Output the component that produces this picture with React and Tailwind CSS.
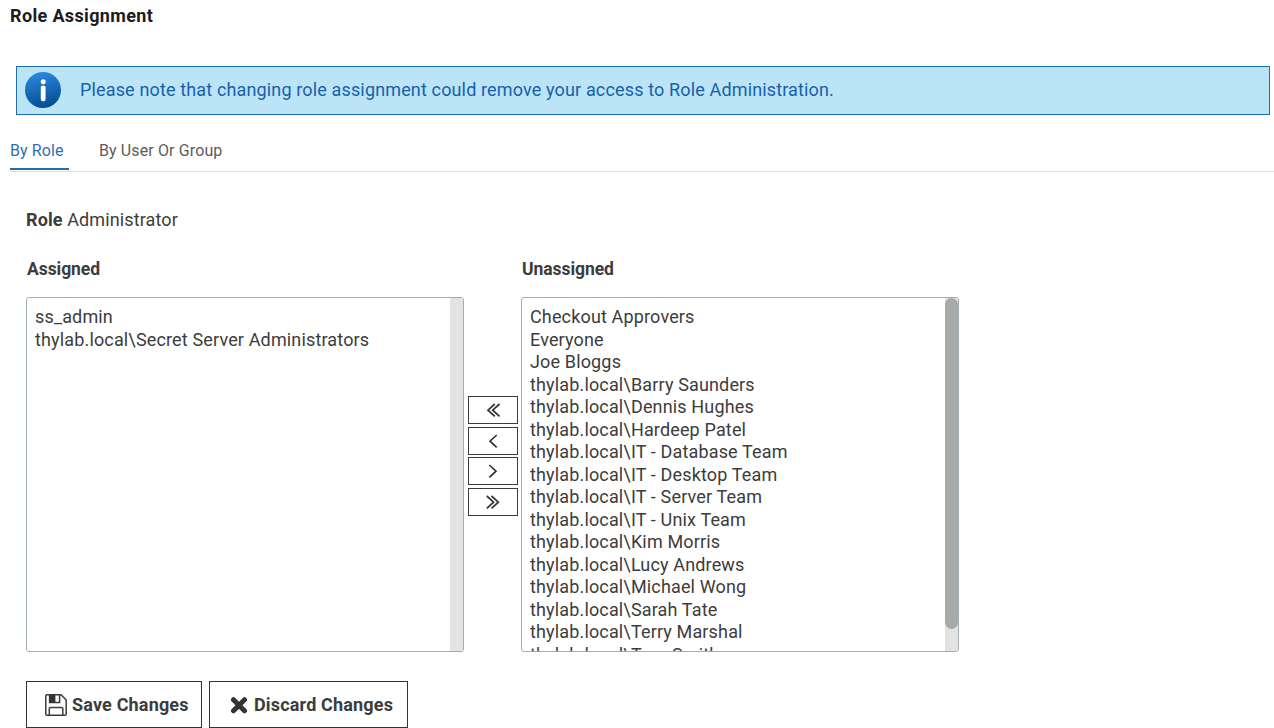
const assigned = ['ss_admin', 'thylab.local\\Secret Server Administrators'];

const unassigned = [
  'Checkout Approvers',
  'Everyone',
  'Joe Bloggs',
  'thylab.local\\Barry Saunders',
  'thylab.local\\Dennis Hughes',
  'thylab.local\\Hardeep Patel',
  'thylab.local\\IT - Database Team',
  'thylab.local\\IT - Desktop Team',
  'thylab.local\\IT - Server Team',
  'thylab.local\\IT - Unix Team',
  'thylab.local\\Kim Morris',
  'thylab.local\\Lucy Andrews',
  'thylab.local\\Michael Wong',
  'thylab.local\\Sarah Tate',
  'thylab.local\\Terry Marshal',
  'thylab.local\\Tom Smith',
];

const arrows = [
  { label: 'Assign all', d: 'M26.8 8 L20 14.2 L26.8 20.4 M31.5 8 L24.7 14.2 L31.5 20.4' },
  { label: 'Assign', d: 'M28.7 8 L22 14.2 L28.7 20.4' },
  { label: 'Unassign', d: 'M21.3 8 L28 14.2 L21.3 20.4' },
  { label: 'Unassign all', d: 'M18.8 8 L25.6 14.2 L18.8 20.4 M23.5 8 L30.3 14.2 L23.5 20.4' },
];

function InfoIcon() {
  return (
    <svg className="mb-[2px] h-9 w-9 shrink-0" viewBox="0 0 36 36">
      <defs>
        <linearGradient id="info" x1="0.1" y1="0" x2="0.3" y2="1">
          <stop offset="0" stopColor="#2f8be0" />
          <stop offset="1" stopColor="#044f94" />
        </linearGradient>
      </defs>
      <circle cx="18" cy="18" r="18" fill="url(#info)" />
      <circle cx="18.2" cy="9.8" r="2.5" fill="#fff" />
      <rect x="15.8" y="13.4" width="4.8" height="15.8" rx="2.2" fill="#fff" />
    </svg>
  );
}

function SaveIcon() {
  return (
    <svg className="h-[22px] w-[22px] shrink-0" viewBox="0 0 22 22" fill="none" stroke="#3c3c3c" strokeWidth="1.5">
      <path d="M2 .8 H16 L21.2 6 V20 Q21.2 21.2 20 21.2 H2 Q.8 21.2 .8 20 V2 Q.8 .8 2 .8 Z" />
      <path d="M4.6 1 V8.4 H14.6 V1" />
      <rect x="4.6" y="1" width="5.8" height="7.4" fill="#333" stroke="none" />
      <path d="M4.3 21 V14.6 Q4.3 13.4 5.5 13.4 H16.6 Q17.8 13.4 17.8 14.6 V21" />
    </svg>
  );
}

function DiscardIcon() {
  return (
    <svg className="h-[18px] w-[18px] shrink-0" viewBox="0 0 18 18" fill="none" stroke="#333" strokeWidth="5">
      <path d="M3.5 3.7 L14.5 14.7 M14.5 3.7 L3.5 14.7" strokeLinecap="round" />
    </svg>
  );
}

function ListBox({ title, items, thumb }) {
  return (
    <section className="w-[438px]">
      <h2 className="h-[41px] pt-px pl-px text-[17.5px] leading-6 font-bold tracking-[-0.06px]">{title}</h2>
      <div className="flex h-[355px] overflow-hidden rounded-[3px] border border-[#a1adb5]">
        <ul className="flex-1 overflow-hidden pt-2 pl-2 text-[18px] leading-[22.5px] tracking-[0.15px]">
          {items.map((name) => (
            <li key={name} className="whitespace-nowrap">{name}</li>
          ))}
        </ul>
        <div className="w-[13px] bg-[#e3e3e3]">
          {thumb && <div className="h-[331px] rounded-full bg-[#a9a9a9]" />}
        </div>
      </div>
    </section>
  );
}

export default function App() {
  return (
    <main className="h-[728px] w-[1274px] overflow-hidden bg-white font-['Roboto',sans-serif] text-[#3c3c3c]">
      <h1 className="h-[66px] pt-1 pl-[10px] text-[18px] leading-6 font-bold tracking-[0.35px] text-[#1c1c1c]">Role Assignment</h1>
      <div className="mr-1 ml-4 flex h-[49px] items-center border border-[#1f6cb3] bg-[#bbe5f7] pl-2 text-[18px] text-[#1760ab]">
        <InfoIcon />
        <p className="ml-[19px] pb-[2px] tracking-[0.145px]">Please note that changing role assignment could remove your access to Role Administration.</p>
      </div>
      <nav className="ml-[10px] flex h-[57px] border-b border-[#dcdfe1] pt-[21px] text-[16px] leading-[30px] tracking-[0.12px]">
        <div className="h-[34px] w-[59px] border-b-2 border-[#1f6fae] text-[#2d6fb4]">By Role</div>
        <div className="ml-[30px] text-[#5c5c5c]">By User Or Group</div>
      </nav>
      <div className="pt-9 pl-[26px]">
        <p className="h-12 text-[18px] leading-6 tracking-[0.12px]"><span className="font-bold">Role</span> Administrator</p>
        <div className="flex">
          <ListBox title="Assigned" items={assigned} />
          <div className="flex w-[57px] flex-col items-center gap-[2.7px] pt-[140px]">
            {arrows.map((a) => (
              <button key={a.label} aria-label={a.label} className="h-7 w-[50px] border border-[#3c3c3c]">
                <svg className="-mt-px -ml-px h-7 w-[50px] max-w-none" viewBox="0 0 50 28" fill="none" stroke="#333" strokeWidth="1.7">
                  <path d={a.d} />
                </svg>
              </button>
            ))}
          </div>
          <ListBox title="Unassigned" items={unassigned} thumb />
        </div>
        <div className="mt-[29px] flex gap-[7px] text-[18px] font-bold tracking-[0.17px]">
          <button className="flex h-[47px] w-[176px] items-center border border-[#333] pl-[18px]">
            <SaveIcon />
            <span className="ml-[5px] whitespace-nowrap">Save Changes</span>
          </button>
          <button className="flex h-[47px] w-[199px] items-center border border-[#333] pl-5">
            <DiscardIcon />
            <span className="ml-[6px] whitespace-nowrap">Discard Changes</span>
          </button>
        </div>
      </div>
    </main>
  );
}
